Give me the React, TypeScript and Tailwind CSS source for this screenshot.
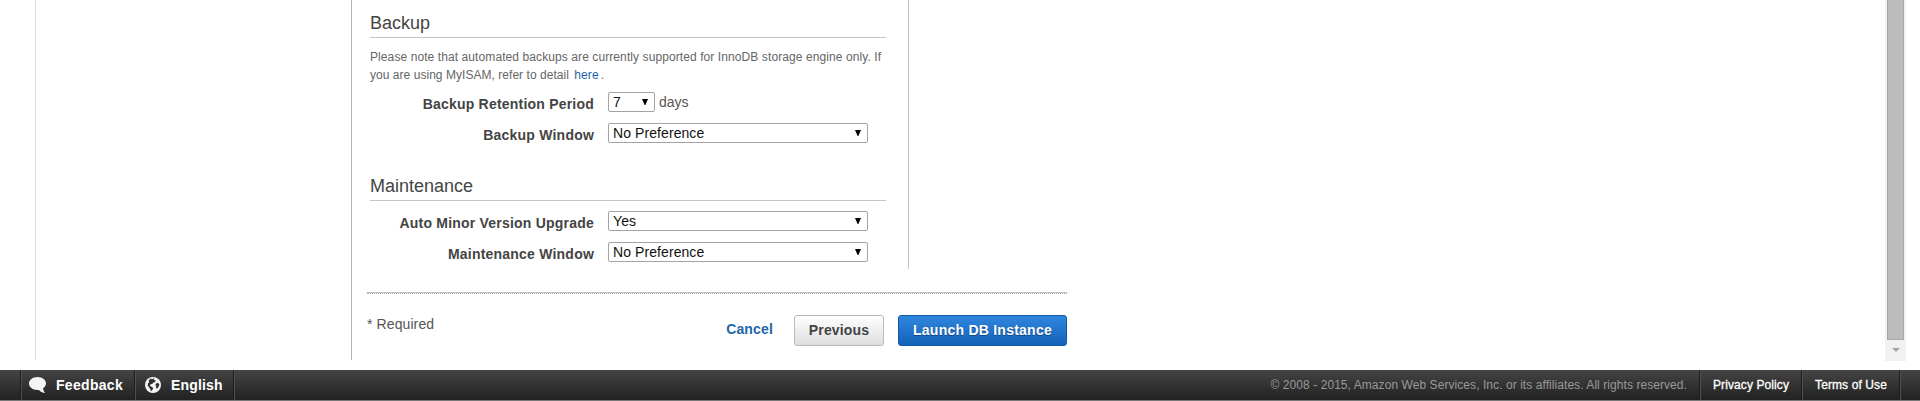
import type { ReactNode } from "react";

function Heading({ children }: { children: ReactNode }) {
  return (
    <h2 className="h-[30px] w-[516px] border-b border-[#c4c4c4] text-[18px] leading-[30px] text-[#444]">
      {children}
    </h2>
  );
}

function Select({ value, className }: { value: string; className: string }) {
  return (
    <button
      className={`flex h-5 items-center justify-between rounded-[2px] border border-[#a3a3a3] bg-white pr-[6px] pl-1 text-[14px] leading-[18px] tracking-[0.08px] text-[#111] ${className}`}
    >
      <span>{value}</span>
      <svg width="6" height="6" viewBox="0 0 6 6" fill="#000">
        <path d="M0 0H6L3.400 6H2.600Z" />
      </svg>
    </button>
  );
}

function Row({ label, children }: { label: string; children: ReactNode }) {
  return (
    <div className="flex h-5">
      <div className="mr-[14px] w-[224px] pt-[2px] text-right text-[14px] leading-5 font-bold tracking-[0.21px] whitespace-nowrap text-[#444]">
        {label}
      </div>
      {children}
    </div>
  );
}

function Divider() {
  return <div className="h-[30px] w-[2px] border-r border-l border-r-[#505050] border-l-[#1c1c1c]" />;
}

export default function App() {
  return (
    <div className="flex h-[401px] w-[1920px] flex-col overflow-hidden bg-white font-['Liberation_Sans',Arial,sans-serif]">
      <main className="flex h-[370px]">
        <div className="ml-[35px] h-[360px] w-[316px] border-l border-[#dadada]" />
        <div className="flex h-[360px] w-[1534px] flex-col border-l border-[#b5b5b5]">
          <section className="h-[269px] w-[557px] border-r border-[#c4c4c4] pt-2 pl-[18px]">
            <Heading>Backup</Heading>
            <p className="mt-[10px] mb-2 h-9 text-[12px] leading-[18px] tracking-[0.09px] whitespace-nowrap text-[#666]">
              Please note that automated backups are currently supported for InnoDB storage engine only. If
              <br />
              <span className="tracking-[0.04px]">you are using MyISAM, refer to detail</span>{" "}
              <a className="ml-[2px] text-[#1f5fa5]">here</a>
              <span className="ml-[2px]">.</span>
            </p>
            <Row label="Backup Retention Period">
              <Select value="7" className="w-[47px]" />
              <span className="ml-1 text-[14px] leading-5 text-[#555]">days</span>
            </Row>
            <div className="h-[11px]" />
            <Row label="Backup Window">
              <Select value="No Preference" className="w-[260px]" />
            </Row>
            <div className="h-7" />
            <Heading>Maintenance</Heading>
            <div className="h-[10px]" />
            <Row label="Auto Minor Version Upgrade">
              <Select value="Yes" className="w-[260px]" />
            </Row>
            <div className="h-[11px]" />
            <Row label="Maintenance Window">
              <Select value="No Preference" className="w-[260px]" />
            </Row>
          </section>
          <div className="mt-[23px] ml-[15px] w-[700px] border-t border-[#c0c0c0]">
            <div className="h-px border-t border-dotted border-[#aaa]" />
          </div>
          <div className="mt-[21px] ml-[15px] flex h-[31px] w-[700px] text-[14px] leading-5 font-bold">
            <span className="-mt-px font-normal tracking-[0.1px] text-[#555]">* Required</span>
            <a className="mt-[4px] ml-auto tracking-[0.16px] text-[#1f66aa]">Cancel</a>
            <button className="ml-[21px] h-[31px] w-[90px] rounded-[3px] border border-[#bbb] bg-linear-to-b from-white to-[#dedede] pb-[2px] tracking-[0.16px] text-[#444]">
              Previous
            </button>
            <button className="ml-[14px] h-[31px] w-[169px] rounded-[3px] border border-[#1159a8] bg-linear-to-b from-[#2f86de] to-[#1462b9] pb-[2px] tracking-[0.24px] text-white [text-shadow:0_1px_1px_#0c4383]">
              Launch DB Instance
            </button>
          </div>
        </div>
        <div className="flex h-[361px] w-[21px] flex-col items-center bg-[#f1f1f1]">
          <div className="h-[340px] w-[17px] border border-t-0 border-[#a8a8a8] bg-[#bcbcbc]" />
          <svg className="mt-2" width="8" height="4" viewBox="0 0 8 4" fill="#a3a3a3">
            <path d="M0 0H8L4 4Z" />
          </svg>
        </div>
      </main>
      <footer className="flex h-[31px] items-start border-b border-[#777] bg-linear-to-b from-[#444] to-[#222] text-[14px] leading-[30px] font-bold text-white">
        <div className="w-5" />
        <Divider />
        <div className="flex h-[30px] w-[112px] items-center pl-[7px]">
          <svg width="17" height="16" viewBox="0 0 17 16" fill="#f5f5f5">
            <path d="M8.5 0C3.8 0 0 2.9 0 6.5S3.8 13 8.5 13L10 12.900C11.500 14.700 13.500 15.700 16 15.900C15 14.500 14.200 13 14.100 11.200C15.900 10 17 8.300 17 6.500C17 2.900 13.200 0 8.500 0Z" />
          </svg>
          <span className="ml-[10px] tracking-[0.3px]">Feedback</span>
        </div>
        <Divider />
        <div className="flex h-[30px] w-[97px] items-center pl-[9px]">
          <svg width="16" height="16" viewBox="0 0 16 16">
            <circle cx="8" cy="8" r="8" fill="#f5f5f5" />
            <path
              d="M5.300 1.500L7 2.200L9.400 1.300L8.800 3.100L10.800 3.500L10 5.200L8.300 5.400L7.300 7L5.600 7.300L4.800 8.600L6.200 9.700L7.300 10L8.200 11.500L7 13.400L6 14.200L5.300 12.300L4 10.300L2.700 8.500L3 6.300L4.300 5.500L3.600 4ZM11.200 6.400L13 5.800L14.400 7.400L13.600 9.700L12 11.700L10.800 10.800L11.300 9L10.200 8Z"
              fill="#303030"
            />
          </svg>
          <span className="ml-[10px] tracking-[0.16px]">English</span>
        </div>
        <Divider />
        <div className="flex-1 pr-[12px] text-right text-[12px] font-normal tracking-[0.065px] text-[#999]">
          © 2008 - 2015, Amazon Web Services, Inc. or its affiliates. All rights reserved.
        </div>
        <Divider />
        <div className="w-[100px] text-center text-[12px] font-normal tracking-[0.1px] [-webkit-text-stroke:0.3px_white]">
          Privacy Policy
        </div>
        <Divider />
        <div className="w-[96px] text-center text-[12px] font-normal tracking-[0.1px] [-webkit-text-stroke:0.3px_white]">
          Terms of Use
        </div>
        <Divider />
        <div className="w-[19px]" />
      </footer>
    </div>
  );
}
